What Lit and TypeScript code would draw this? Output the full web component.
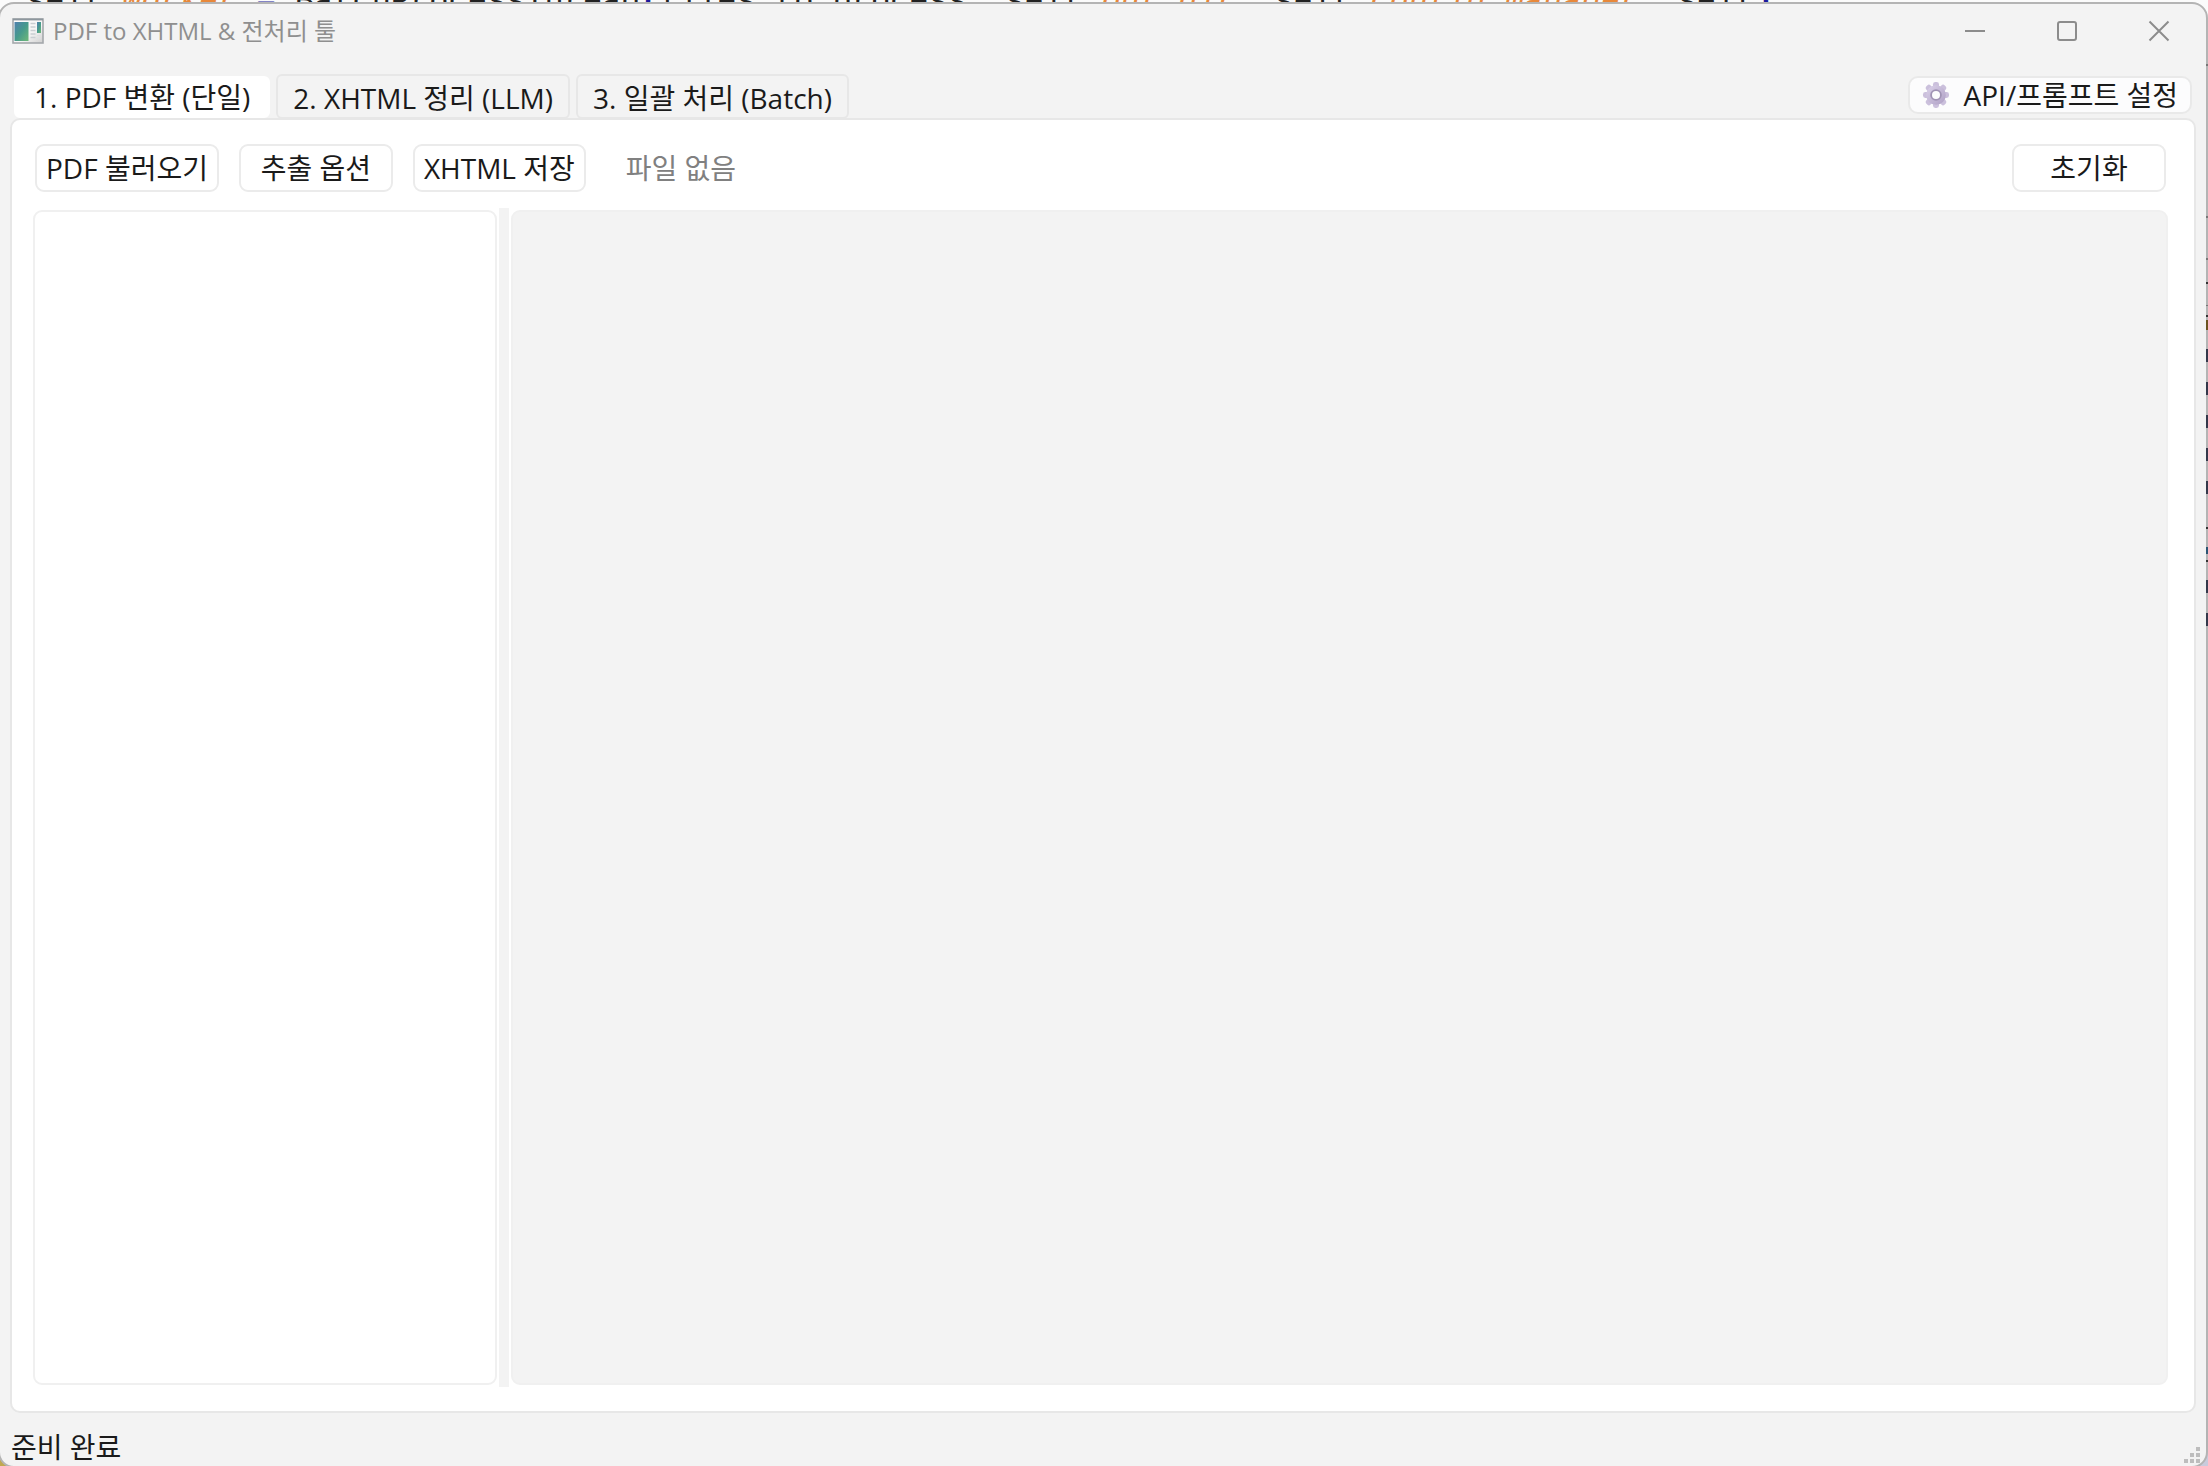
import { LitElement, html, css, svg } from "lit";
import { customElement, state } from "lit/decorators.js";
import { classMap } from "lit/directives/class-map.js";
import { styleMap } from "lit/directives/style-map.js";

const TABS = ["1. PDF 변환 (단일)", "2. XHTML 정리 (LLM)", "3. 일괄 처리 (Batch)"];

/** Slivers of the editor behind the window that show along its right edge. */
const EDGE_MARKS: Array<{ top: number; size: number; color: string }> = [
  { top: 64, size: 2, color: "#777" },
  { top: 216, size: 2, color: "#777" },
  { top: 258, size: 2, color: "#777" },
  { top: 282, size: 2, color: "#333" },
  { top: 305, size: 1, color: "#777" },
  { top: 315, size: 2, color: "#333" },
  { top: 320, size: 10, color: "#6b5320" },
  { top: 349, size: 13, color: "#33384a" },
  { top: 382, size: 13, color: "#33384a" },
  { top: 415, size: 13, color: "#33384a" },
  { top: 448, size: 13, color: "#33384a" },
  { top: 481, size: 13, color: "#33384a" },
  { top: 527, size: 2, color: "#333" },
  { top: 547, size: 7, color: "#2b5573" },
  { top: 560, size: 2, color: "#333" },
  { top: 580, size: 13, color: "#33384a" },
  { top: 613, size: 13, color: "#33384a" },
];

@customElement("code-strip")
export class CodeStrip extends LitElement {
  static styles = css`
    :host {
      display: block;
      height: 4px;
      overflow: hidden;
    }
    .line {
      padding-left: 26px;
      font: 32px/4px "Liberation Mono", monospace;
      white-space: pre;
      color: #222;
    }
    .attr {
      color: #e8883a;
      font-style: italic;
    }
    .mark {
      color: #1a1a9c;
      font-weight: bold;
    }
  `;

  render() {
    return html`<div class="line" aria-hidden="true">self.<span class="attr">worker</span> <span class="mark">=</span> BatchProcessThread<span class="mark">(</span>files_to_process, self.<span class="attr">out_dir</span>, self.<span class="attr">config_manager</span>, self<span class="mark">)</span></div>`;
  }
}

@customElement("title-bar")
export class TitleBar extends LitElement {
  static styles = css`
    :host {
      display: flex;
      align-items: center;
      height: 54px;
      padding: 0 1px 0 12px;
    }
    .app-icon {
      width: 32px;
      height: 26px;
    }
    .title {
      flex: 1;
      margin: 0 0 0 9px;
      font-size: 24px;
      font-weight: 400;
      line-height: 32px;
      color: #8f8f8f;
    }
    .control {
      display: flex;
      align-items: center;
      justify-content: center;
      width: 92px;
      height: 54px;
      padding: 0;
      border: 0;
      background: none;
      color: #8c8c8c;
    }
    .control svg {
      width: 22px;
      height: 22px;
      fill: none;
      stroke: currentColor;
      stroke-width: 2;
    }
  `;

  private control(label: string, shape: unknown) {
    return html`<button class="control" aria-label=${label}>
      <svg viewBox="0 0 22 22">${shape}</svg>
    </button>`;
  }

  render() {
    return html`
      <svg class="app-icon" viewBox="0 0 32 26" aria-hidden="true">
        <defs>
          <linearGradient id="screen" x1="0" y1="0" x2="1" y2="1">
            <stop offset="0" stop-color="#4f7fae" />
            <stop offset="0.5" stop-color="#469a8c" />
            <stop offset="1" stop-color="#6fb878" />
          </linearGradient>
          <linearGradient id="frame" x1="0" y1="0" x2="1" y2="1">
            <stop offset="0" stop-color="#ffffff" />
            <stop offset="0.6" stop-color="#f4f4f4" />
            <stop offset="1" stop-color="#cfcfcf" />
          </linearGradient>
        </defs>
        <rect x="1" y="1" width="30" height="24" fill="url(#frame)" stroke="#a4a8ac" stroke-width="1.6" />
        <rect x="1" y="0.6" width="30" height="1.8" fill="#8e979e" />
        <rect x="2.5" y="4" width="14" height="19" fill="url(#screen)" />
        <path d="M18.5 5.500h5M18.500 9h5M18.500 12.500h5M18.500 16h5M18.500 19.500h5" stroke="#c9ced2" stroke-width="1.4" />
        <rect x="25" y="4" width="4" height="11" fill="url(#screen)" />
        <path d="M25 17.500h4M25 20.500h4" stroke="#dcdfe1" stroke-width="1.2" />
      </svg>
      <h1 class="title">PDF to XHTML &amp; 전처리 툴</h1>
      ${this.control("최소화", svg`<path d="M1 11h20" />`)}
      ${this.control("최대화", svg`<rect x="2" y="2" width="18" height="18" rx="2" />`)}
      ${this.control("닫기", svg`<path d="M1.500 1.500l19 19M20.500 1.500l-19 19" />`)}
    `;
  }
}

@customElement("app-root")
export class AppRoot extends LitElement {
  static styles = css`
    :host {
      display: flex;
      flex-direction: column;
      position: relative;
      height: 100vh;
      overflow: hidden;
      background: linear-gradient(90deg, #c0a850 0 50%, #c9cbdc 50%) bottom / 100% 40px no-repeat #fbfbfb;
      font-family: "Open Sans", "Noto Sans CJK KR", sans-serif;
      font-size: 28px;
      line-height: 36px;
      color: #1a1a1a;
    }
    button {
      font: inherit;
      color: inherit;
      white-space: nowrap;
    }
    .window {
      flex: 1;
      display: flex;
      flex-direction: column;
      min-height: 0;
      margin: -2px 0 -2px -2px;
      border: 2px solid #b4b4b4;
      border-radius: 16px;
      background: #f3f3f3;
      overflow: hidden;
    }
    .edge-mark {
      position: absolute;
      right: 0;
      width: 2px;
    }
    .tab-row {
      display: flex;
      align-items: flex-end;
      gap: 6px;
      height: 61px;
      padding: 0 14px;
    }
    .tab {
      height: 45px;
      padding: 2px 15px 0;
      border: 2px solid #e7e7e7;
      border-radius: 6px;
      background: #f3f3f3;
    }
    .tab.active {
      height: 42px;
      margin-bottom: 1px;
      padding: 0 18px;
      border-color: #fff;
      background: #fff;
    }
    .settings {
      display: flex;
      align-items: center;
      gap: 14px;
      height: 38px;
      margin: 0 0 5px auto;
      padding: 0 12px;
      border: 2px solid #e9e9e9;
      border-radius: 10px;
      background: #fcfcfd;
    }
    .gear {
      width: 28px;
      height: 28px;
    }
    .panel {
      flex: 1;
      display: flex;
      flex-direction: column;
      gap: 16px;
      min-height: 0;
      margin: -1px 10px 0;
      padding: 24px 26px 24px 21px;
      border: 2px solid #e7e7e7;
      border-radius: 10px;
      background: #fff;
    }
    .toolbar {
      display: flex;
      align-items: center;
      gap: 20px;
      padding: 0 2px;
    }
    .tool {
      min-width: 154px;
      height: 48px;
      padding: 0 9px;
      border: 2px solid #ebebeb;
      border-radius: 9px;
      background: #fff;
    }
    .file-name {
      flex: 1;
      margin-left: 20px;
      color: #808080;
    }
    .split {
      flex: 1;
      display: grid;
      grid-template-columns: 28fr 10px 100fr;
      gap: 2px;
      min-height: 0;
    }
    .pane {
      margin: 2px 0;
      border: 2px solid #f0f0f0;
      border-radius: 9px;
    }
    .preview,
    .splitter {
      background: #f3f3f3;
    }
    .status {
      display: flex;
      justify-content: space-between;
      height: 53px;
      padding-left: 11px;
    }
    .status-text {
      padding-top: 16px;
    }
    .grip {
      align-self: flex-end;
      width: 16px;
      height: 16px;
      margin: 0 6px 3px 0;
      fill: #bdbdbd;
    }
  `;

  @state() private active = 0;

  private gear() {
    const teeth = [0, 45, 90, 135, 180, 225, 270, 315];
    return html`<svg class="gear" viewBox="0 0 28 28" aria-hidden="true">
      <defs>
        <linearGradient id="metal" x1="0" y1="0" x2="1" y2="1">
          <stop offset="0" stop-color="#dcd3ea" />
          <stop offset="1" stop-color="#ae9fc4" />
        </linearGradient>
      </defs>
      <g fill="url(#metal)">
        ${teeth.map((a) => svg`<rect x="11" y="1" width="6" height="8" rx="2.4" fill="#cbc0dc" transform="rotate(${a} 14 14)" />`)}
        <circle cx="14" cy="14" r="9.8" />
      </g>
      <circle cx="14" cy="14" r="5.800" fill="#a093b4" />
      <circle cx="14" cy="14" r="4" fill="#fcfcfd" />
    </svg>`;
  }

  render() {
    return html`
      <code-strip></code-strip>
      <main class="window">
        <title-bar></title-bar>
        <div class="tab-row">
          ${TABS.map(
            (label, i) => html`<button
              class=${classMap({ tab: true, active: i === this.active })}
              aria-pressed=${i === this.active}
              @click=${() => (this.active = i)}
            >${label}</button>`
          )}
          <button class="settings">${this.gear()}<span>API/프롬프트 설정</span></button>
        </div>
        <section class="panel">
          <div class="toolbar">
            <button class="tool">PDF 불러오기</button>
            <button class="tool">추출 옵션</button>
            <button class="tool">XHTML 저장</button>
            <span class="file-name">파일 없음</span>
            <button class="tool">초기화</button>
          </div>
          <div class="split">
            <div class="pane"></div>
            <div class="splitter"></div>
            <div class="pane preview"></div>
          </div>
        </section>
        <footer class="status">
          <span class="status-text">준비 완료</span>
          <svg class="grip" viewBox="0 0 16 16" aria-hidden="true">
            <path d="M12 0h4v4h-4zM6 6h4v4h-4zM12 6h4v4h-4zM0 12h4v4h-4zM6 12h4v4h-4zM12 12h4v4h-4z" />
          </svg>
        </footer>
      </main>
      ${EDGE_MARKS.map(
        (m) => html`<i class="edge-mark" style=${styleMap({ top: `${m.top}px`, height: `${m.size}px`, background: m.color })}></i>`
      )}
    `;
  }
}
